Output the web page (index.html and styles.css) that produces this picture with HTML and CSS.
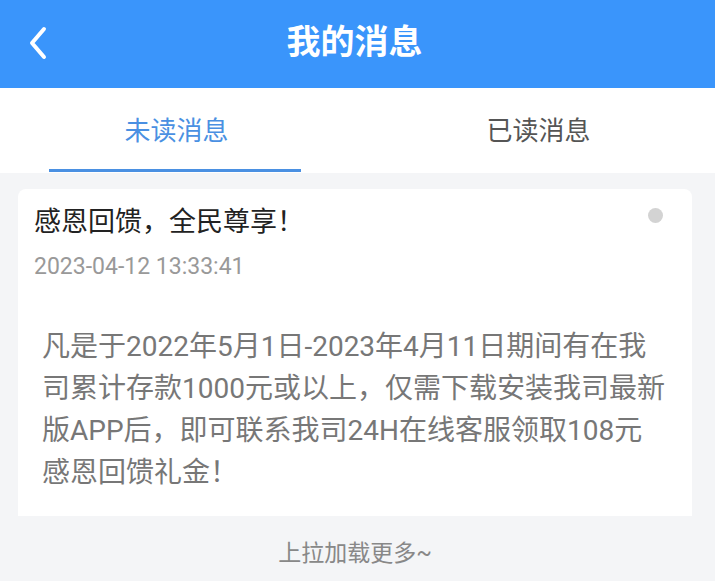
FILE: index.html
```html
<!DOCTYPE html>
<html lang="zh">
<head>
<meta charset="utf-8">
<title>我的消息</title>
<link rel="stylesheet" href="styles.css">
</head>
<body>
<header class="nav">
  <div class="nav-back">
    <svg width="22" height="34" viewBox="0 0 22 34"><path d="M17 3 L5 17 L17 31" fill="none" stroke="#fff" stroke-width="4" stroke-linecap="round" stroke-linejoin="round"/></svg>
  </div>
  <h1 class="nav-title">我的消息</h1>
  <div class="nav-side"></div>
</header>
<nav class="tabs">
  <div class="tab tab-active">未读消息</div>
  <div class="tab">已读消息</div>
</nav>
<main class="list">
  <section class="card">
    <div class="card-head">
      <div class="card-title">感恩回馈，全民尊享！</div>
      <div class="card-date">2023-04-12 13:33:41</div>
      <span class="dot"></span>
    </div>
    <div class="card-body">凡是于2022年5月1日-2023年4月11日期间有在我司累计存款1000元或以上，仅需下载安装我司最新版APP后，即可联系我司24H在线客服领取108元感恩回馈礼金！</div>
  </section>
  <div class="more">上拉加载更多~</div>
</main>
</body>
</html>
```

FILE: styles.css
```css
* { box-sizing: border-box; }
html, body {
  margin: 0;
  padding: 0;
}
body {
  width: 715px;
  min-height: 581px;
  background: #f4f5f7;
  font-family: Roboto, "Noto Sans CJK SC", "Noto Sans", sans-serif;
}
.nav {
  height: 88px;
  background: #3a95fb;
  display: grid;
  grid-template-columns: 1fr auto 1fr;
  align-items: center;
}
.nav-back {
  padding-left: 27px;
  display: flex;
  align-items: center;
  height: 88px;
  padding-bottom: 2px;
}
.nav-title {
  margin: 0;
  color: #fff;
  font-size: 34px;
  font-weight: 700;
  line-height: 40px;
  padding-bottom: 4px;
  padding-right: 6px;
}
.tabs {
  height: 85px;
  background: #fff;
  display: flex;
}
.tab {
  flex: 1;
  position: relative;
  display: flex;
  align-items: center;
  justify-content: center;
  font-size: 26px;
  color: #555;
  padding-bottom: 4px;
}
.tab-active {
  color: #4a90e2;
  padding-right: 9px;
}
.tab-active::after {
  content: "";
  position: absolute;
  left: 49px;
  bottom: 1px;
  width: 252px;
  height: 3px;
  background: #4a90e2;
}
.list {
  padding: 16px 23px 0 18px;
}
.card {
  background: #fff;
  border-radius: 8px 8px 0 0;
}
.card-head {
  position: relative;
  padding: 14px 16px 18px 16px;
}
.card-title {
  font-size: 27px;
  line-height: 38px;
  color: #222;
}
.card-date {
  margin-top: 11px;
  font-size: 23px;
  line-height: 30px;
  color: #999;
}
.dot {
  position: absolute;
  top: 19px;
  right: 29px;
  width: 15px;
  height: 15px;
  border-radius: 50%;
  background: #d3d3d3;
}
.card-body {
  padding: 26px 24px 22px 24px;
  font-size: 28px;
  line-height: 42px;
  color: #777;
}
.more {
  margin-top: 23px;
  text-align: center;
  font-size: 23px;
  line-height: 30px;
  color: #888;
}
```
